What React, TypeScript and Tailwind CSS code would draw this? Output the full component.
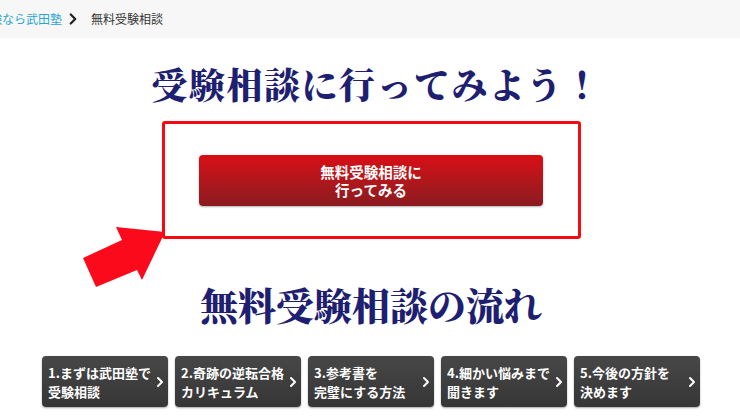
import React from 'react';
import { ChevronRight } from 'lucide-react';

const STEPS = [
  ['1.まずは武田塾で', '受験相談'],
  ['2.奇跡の逆転合格', 'カリキュラム'],
  ['3.参考書を', '完璧にする方法'],
  ['4.細かい悩みまで', '聞きます'],
  ['5.今後の方針を', '決めます'],
];

const sans = { fontFamily: '"Noto Sans CJK JP", "Noto Sans", sans-serif' };
const serif = { fontFamily: '"Noto Serif CJK JP", "Noto Sans CJK JP", serif' };

const App: React.FC = () => {
  return (
    <div className="relative w-[740px] h-[416px] overflow-hidden bg-white" style={sans}>
      {/* Breadcrumb */}
      <nav className="h-[38px] bg-[#f7f7f7] flex items-center text-[12px] leading-none whitespace-nowrap">
        <span className="ml-[-46px] text-[#2ba4d4]">大学受験なら武田塾</span>
        <ChevronRight size={18} strokeWidth={3} className="ml-[2px] mr-[9px] text-[#222]" />
        <span className="text-[#333]">無料受験相談</span>
      </nav>

      <div className="flex flex-col items-center pl-[2px]">
        <h1 className="mt-[22px] ml-[11px] text-[36px] leading-[48px] font-black tracking-[1.5px] text-[#1f1f72]" style={serif}>
          受験相談に行ってみよう！
        </h1>

        {/* CTA box */}
        <div className="mt-[13px] w-[419px] h-[118px] border-[3px] border-[#f50a14] rounded-[3px] flex justify-center pt-[31px]">
          <button className="w-[344px] h-[51px] rounded-[4px] bg-gradient-to-b from-[#d90c14] to-[#8a1a1f] shadow-[0_1px_2px_rgba(0,0,0,0.3)] text-white font-bold text-[14.5px] leading-[18px]">
            無料受験相談に<br />行ってみる
          </button>
        </div>

        <h2 className="mt-[40px] text-[38px] leading-[50px] font-black text-[#1f1f72]" style={serif}>
          無料受験相談の流れ
        </h2>

        {/* Steps */}
        <div className="mt-[27px] flex gap-[7px]">
          {STEPS.map(([a, b]) => (
            <div
              key={a}
              className="w-[126px] h-[51px] rounded-[4px] bg-gradient-to-b from-[#474747] to-[#363636] shadow-[0_1px_2px_rgba(0,0,0,0.35)] flex items-center pl-[6px] text-white font-bold text-[13px] leading-[19px]"
            >
              <div className="whitespace-nowrap">
                <div>{a}</div>
                <div>{b}</div>
              </div>
              <ChevronRight size={16} strokeWidth={3} className="shrink-0 ml-auto" />
            </div>
          ))}
        </div>
      </div>

      {/* Pointer arrow */}
      <svg className="absolute left-[80px] top-[225px]" width="90" height="66" viewBox="0 0 90 66">
        <polygon points="85,7 36,2 42,15 3,33 16,62 57,45 62,55" fill="#fb0a1c" />
      </svg>
    </div>
  );
};

export default App;
